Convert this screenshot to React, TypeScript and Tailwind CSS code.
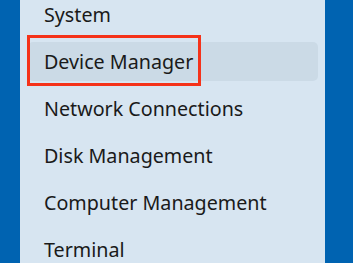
import React from "react";

const items = ["System", "Device Manager", "Network Connections", "Disk Management", "Computer Management", "Terminal"];

export default function App() {
  return (
    <div className="w-[353px] h-[263px] bg-[#0063b1] overflow-hidden flex" style={{ fontFamily: '"Noto Sans", "Open Sans", sans-serif' }}>
      <div className="ml-[20px] w-[305px] h-full bg-[#d7e5f1] overflow-hidden">
        <div className="mt-[-9px] flex flex-col">
          {items.map((t) => (
            <div key={t} className="h-[47px] py-[4px] pl-[8px] pr-[7px]">
              <div className={`relative h-[39px] rounded-[5px] pl-[16px] flex items-center text-[19.7px] text-[#1a1a1a] ${t === "Device Manager" ? "bg-[#cbdae6]" : ""}`}>
                {t}
                {t === "Device Manager" && (
                  <div className="absolute left-[-1px] top-[-7px] w-[174px] h-[51px] border-[3px] border-[#f5321a]" />
                )}
              </div>
            </div>
          ))}
        </div>
      </div>
    </div>
  );
}
